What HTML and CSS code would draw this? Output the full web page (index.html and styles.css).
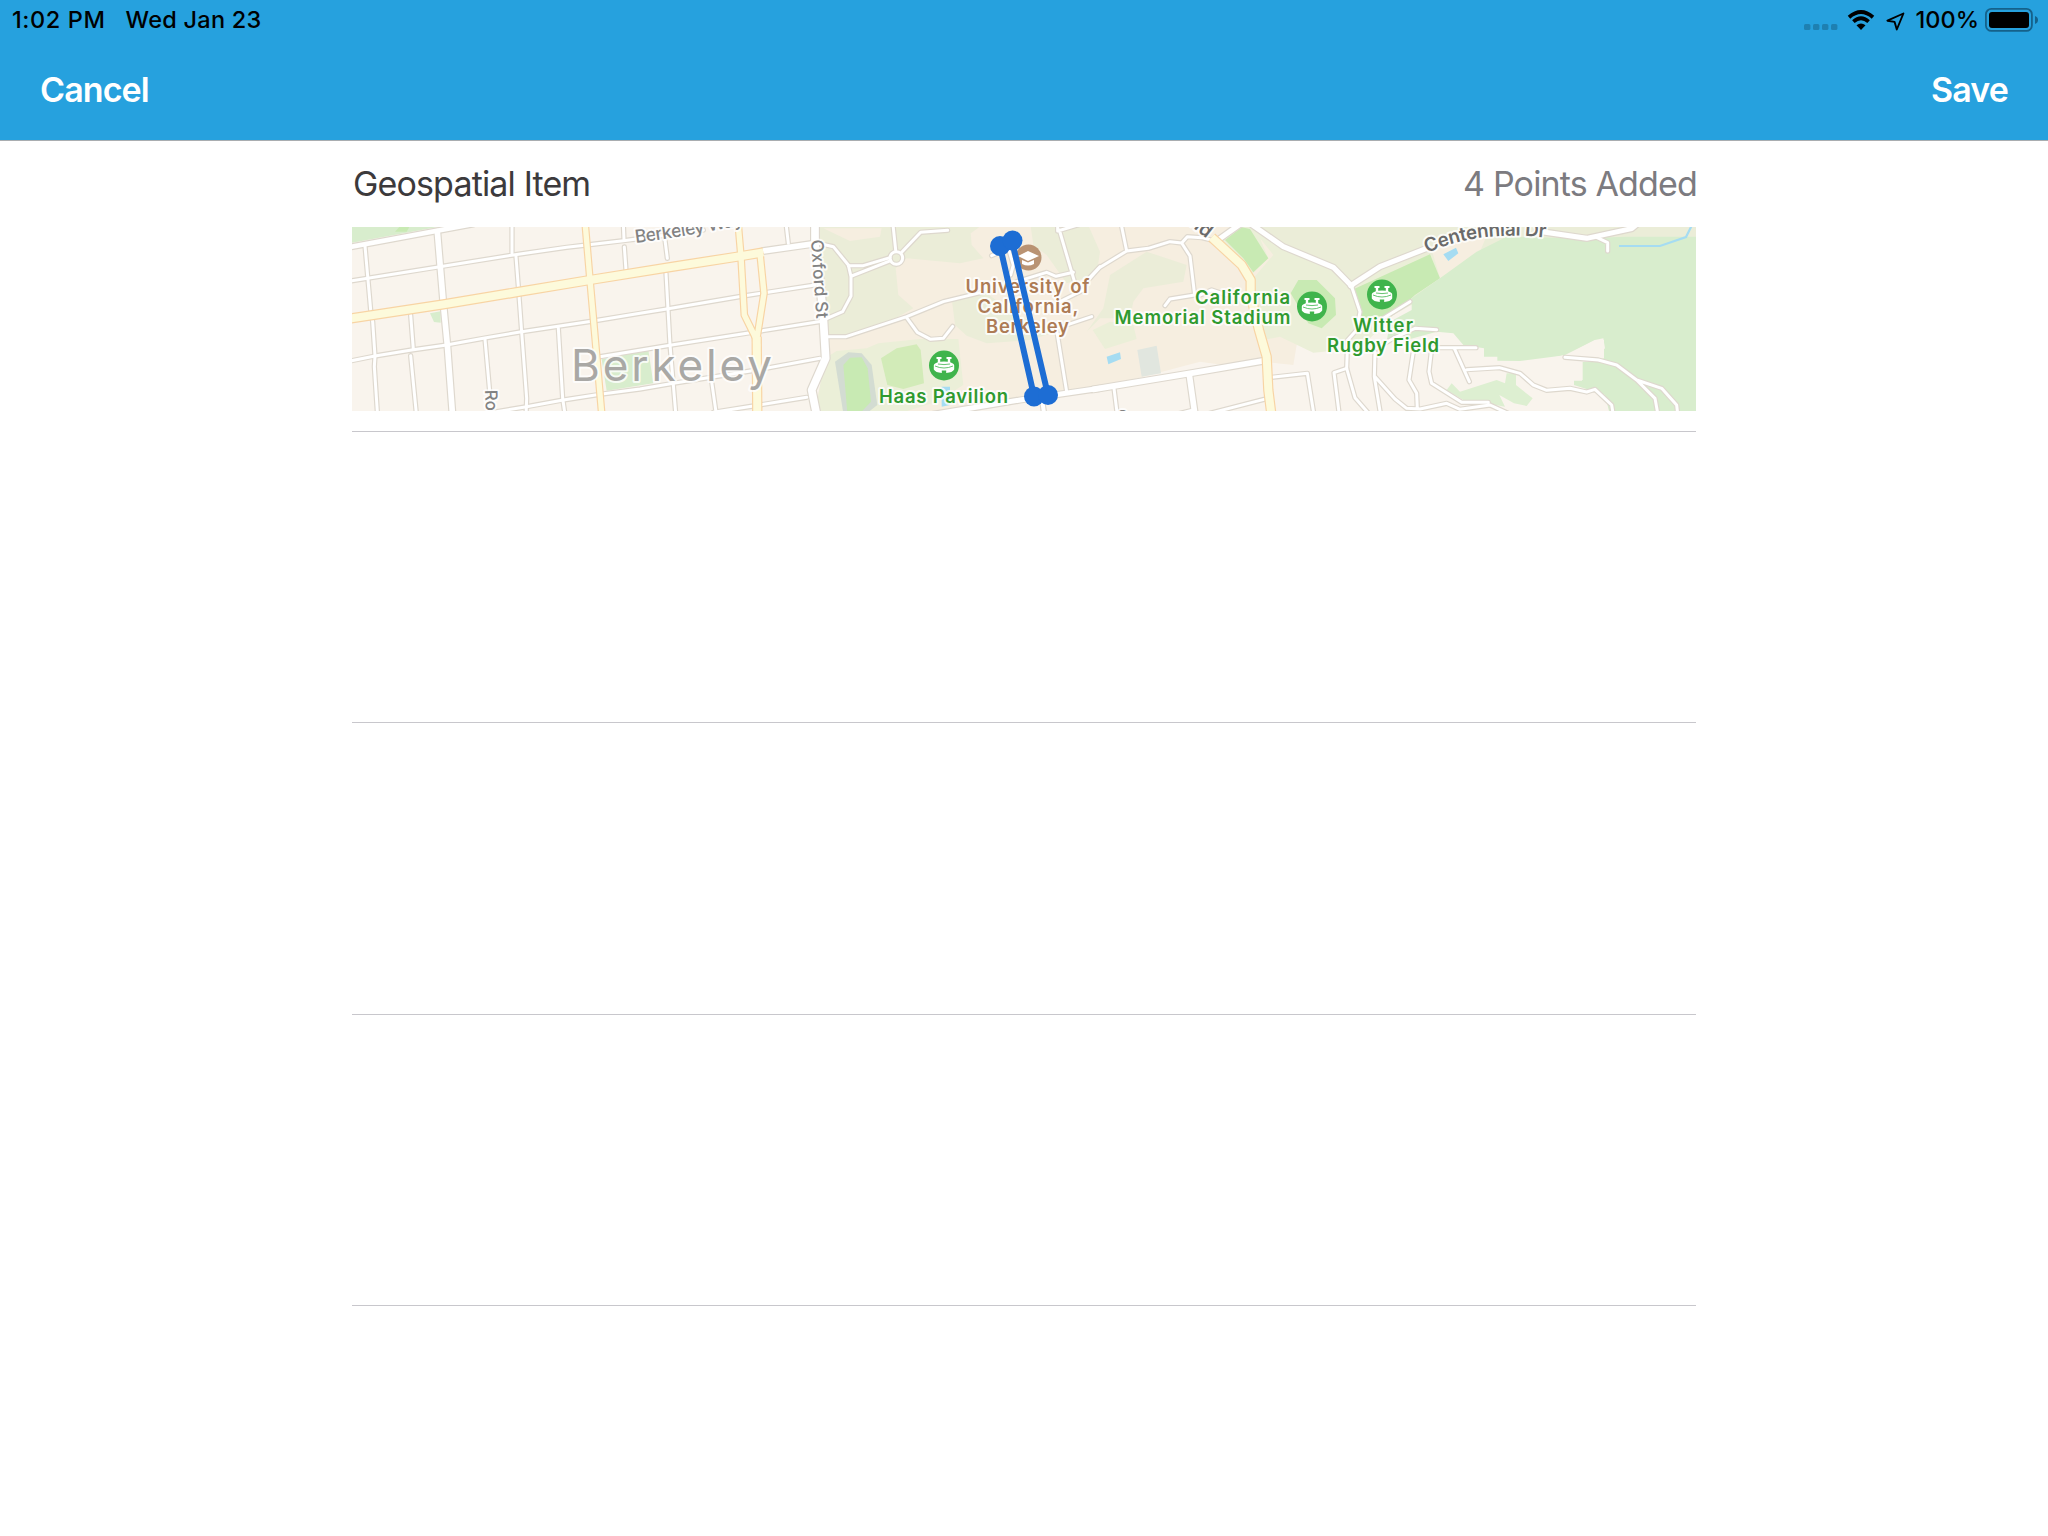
FILE: index.html
```html
<!DOCTYPE html>
<html lang="en">
<head>
<meta charset="utf-8">
<title>Geospatial Item</title>
<link rel="stylesheet" href="styles.css">
</head>
<body>
<header class="top">
  <div class="status">
    <div class="status-left"><span class="time">1:02 PM</span><span class="date">Wed Jan 23</span></div>
    <div class="status-right">
      <svg class="dots" viewBox="0 0 34 6"><rect width="6.4" height="6" rx="1.6"/><rect x="9" width="6.4" height="6" rx="1.6"/><rect x="18" width="6.4" height="6" rx="1.6"/><rect x="27" width="6.4" height="6" rx="1.6"/></svg>
      <svg class="wifi" viewBox="0 0 28 20"><path d="M2 7.2Q14-3.2 26 7.2M6.4 11.6Q14 5 21.6 11.6" fill="none" stroke="#000" stroke-width="3.8"/><path d="M9.5 15.3Q14 11.8 18.5 15.3L14 20Z"/></svg>
      <svg class="arrow" viewBox="0 0 19 19"><path d="M17.4 1.5 1.4 8.7 8.6 9.900 10.800 17.500Z" fill="none" stroke="#000" stroke-width="1.9" stroke-linejoin="round"/></svg>
      <span class="pct">100%</span>
      <svg class="battery" viewBox="0 0 54 24"><rect x=".9" y=".9" width="46" height="22" rx="5.5" fill="none" stroke="#15618a" stroke-width="1.8"/><rect x="4" y="4" width="40" height="16" rx="3"/><path d="M50 8q3 1.2 3 4t-3 4Z" fill="#15618a"/></svg>
    </div>
  </div>
  <nav class="bar"><span class="cancel">Cancel</span><span class="save">Save</span></nav>
</header>
<main class="form">
  <section class="item">
    <div class="heading"><h1 class="title">Geospatial Item</h1><span class="count">4 Points Added</span></div>
    <svg class="map" viewBox="352 227 1344 184">
      <defs>
        <g id="roads">
          <g transform="translate(340 150) scale(.33333)">
            <path class="r w14" d="M20 293 400 222"/>
            <path class="r w10" d="M20 395 300 350 520 315 680 292 740 285 850 272 890 267 1090 240"/>
            <path class="r w10" d="M20 635 105 618 215 600 320 585 430 565 540 546 760 513 900 490 980 477 1210 438 1425 405"/>
            <path class="r w10" d="M780 620 995 585 1250 545 1450 513"/>
            <path class="r w10" d="M440 790 560 770 670 750 780 733 900 717 1000 700 1250 660 1440 625"/>
            <path class="r w10" d="M1120 787 1240 768 1400 742"/>
            <path class="r w10" d="M75 288 92 480 98 515 105 618 103 650 113 800M212 495 220 598M212 617 230 800M516 220V310M528 320 535 410 545 546 560 745 558 800M435 568 450 735M655 535 668 745 676 800M850 220 852 268M853 291 858 360M975 270 982 325M978 370 990 585 1008 800M1115 695 1130 800M1338 220 1345 280"/>
            <path class="r w18" d="M292 245 310 460 322 585 338 800"/>
            <path class="r w18" d="M1270 303 1430 280"/>
          </g>
          <g transform="translate(800 215) scale(.33333)">
            <path class="r w24" d="M45 20V90L60 200 70 310 77 430 35 525 50 600"/>
            <path class="r w10" d="M55 85 100 95 145 150 153 185V243L128 290 70 315"/>
            <path class="r w10" d="M145 152H190L270 128M155 183 272 137M278 20 287 105M305 112 362 52 443 46"/>
            <circle class="r w10" cx="289" cy="129" r="19"/>
            <path class="r w10" d="M80 365H138L320 305 430 260 545 232M320 308 352 352 392 373 430 370 458 334"/>
            <path class="r w10" d="M575 122 625 100 640 150 632 180M650 200 740 172 768 184 820 172M773 30V48L840 28M778 45 825 205M780 260 850 225 862 195 900 155M770 340 875 305M770 345 800 530"/>
            <path class="r w16" d="M400 598 660 555 900 520"/>
            <path class="r w12" d="M727 560 733 600"/>
          </g>
          <g transform="translate(1060 215) scale(.33333)">
            <path class="r w18" d="M100 523 390 475 607 438"/>
            <path class="r w10" d="M90 190 118 158 200 108 265 100 330 80 365 84 382 65 425 68 465 78M182 20 200 108M365 84 390 123 404 240 330 252 315 272M420 240 455 225 500 240"/>
            <path class="r w10" d="M162 520 172 600M340 600 400 585M430 600 612 553M635 487 742 475 762 600M838 600 822 473 860 460"/>
            <path class="r w18" d="M388 480 405 600"/>
            <path class="r w16" d="M478 72 530 35 560 15"/>
            <path class="r w16" d="M570 25 670 95 820 157 875 213"/>
          </g>
          <g transform="translate(1260 215) scale(.33333)">
            <path class="r w16" d="M272 212 360 155 500 100"/>
            <path class="r w10" d="M275 215 300 290 290 345 263 375 260 460 285 548 330 600M370 310 450 260M350 400 400 370 465 340 530 344M345 410 343 485 362 600M345 485 405 552 440 580 480 582 560 565 600 583 690 570 755 600M460 410 447 495 470 535 472 582M515 400 507 470 515 505 605 562H685M520 398H648M583 400 628 500M620 464 718 458 780 475 820 510 860 526 930 520 980 531 1005 523 1055 570 1060 600"/>
          </g>
          <g transform="translate(1440 150) scale(.33333)">
            <path class="r w16" d="M290 243 440 265 575 236 600 215"/>
            <path class="r w10" d="M470 262 503 278V303M375 622 475 630 530 645 590 690 645 745 655 800M590 690 665 715 710 765 714 800"/>
          </g>
        </g>
        <g id="avenues" transform="translate(340 150) scale(.33333)">
          <path class="r w24" d="M20 507 310 463 540 425 750 390 1000 350 1205 318 1270 307"/>
          <path class="r w16" d="M735 215 750 390 765 560 786 800M1194 215 1203 320 1213 495 1250 570M1260 310 1272 430 1250 570"/>
          <path class="r w24" d="M1250 560 1252 800"/>
          <path class="r w24" d="M2615 262 2640 285 2705 345 2732 390V435L2757 540 2780 620 2785 720 2795 800"/>
        </g>
        <g id="stadium">
          <circle r="15" fill="#3fb44c"/>
          <path d="M-7.500-8.500h5v2h-1.300v2.800q3.800-.6 7.600 0V-6.500H2.500v-2h5v2H6.200v3.300Q10.200-2 10.200 0V4Q8.500 7 2.200 7.500V5H-2.200V7.500Q-8.500 7-10.200 4V0Q-10.200-2-6.200-3.200V-6.500h-1.300Z" fill="#fff"/>
          <path d="M-9 .5Q0 4.500 9 .5M-6-1.500Q0-.3 6-1.500" fill="none" stroke="#3fb44c" stroke-width=".8"/>
        </g>
        <path id="way" d="M636 243Q690 236 752 223"/>
        <path id="centennial" d="M1427 253Q1490 225 1572 242"/>
      </defs>

      <rect class="land" x="352" y="227" width="1344" height="184"/>
      <g transform="translate(340 150) scale(.33333)">
        <path class="park" d="M20 215H380L36 278H20Z"/><path class="field" d="M165 245 178 231H208L200 245Z"/>
        <path class="park" d="M270 490 302 484V518L282 516ZM785 628 925 600 940 700 800 722Z"/>
      </g>
      <g transform="translate(800 215) scale(.33333)">
        <path class="campus" d="M55 20H1700L1500 330 1480 450 1385 440 1270 450 1200 440 900 520 420 595H40L80 430Z"/>
        <path class="olive" d="M55 20H560L512 55 515 90 550 130 480 145 320 130 287 160 295 240 340 280 250 330 140 362 75 355Z"/>
        <path class="campus" d="M70 40H245L240 65 150 78Z"/>
        <path class="olive" d="M455 250 560 235 650 300 770 350 690 375 560 385 500 362 465 330ZM690 20H860L900 110 890 180 800 205 740 120 700 90ZM860 350 910 280 930 180 1040 110 1160 150 1150 200 1030 220 1000 260 990 310 900 310Z"/>
        <path class="lawn" d="M75 430 110 408 200 400 235 385 360 372 475 372 490 510 410 560 300 595H45Z"/>
        <path class="track" d="M105 440 145 412 185 415 215 450 232 570 200 595H130Z"/>
        <path class="field" d="M130 450 150 428 185 427 203 460 213 560 180 595H142Z"/>
        <path class="grass" d="M243 430 290 400 350 388 362 405 372 505 310 522 262 510Z"/>
        <path class="water" d="M425 515H450V570L425 575Z"/>
      </g>
      <g transform="translate(1060 215) scale(.33333)">
        <path class="lawn" d="M465 70 560 20H1500L1000 300 900 400 760 413 660 365 612 375 580 210Z"/>
        <path class="olive" d="M560 20H1920V130H1420L1100 120 940 170 870 200 820 150 660 95Z"/>
        <path class="campus" d="M580 190 640 120 600 70 625 130 578 175ZM1115 110 1200 60 1290 37 1260 110 1140 190 1120 120Z"/>
        <path class="field" d="M495 75 545 37 570 42 625 130 580 172 550 130ZM692 235 715 195H770L825 250 828 300 785 340 745 325Z"/>
        <path class="field" d="M882 222 1110 118 1140 190 1065 240 1000 300 905 310Z"/>
        <path class="pad" d="M232 405 290 392 303 475 245 485Z"/>
        <path class="lawn" d="M98 345 150 320 220 330 230 372 135 402Z"/>
        <path class="water" d="M140 425 180 412 183 432 145 448ZM1150 118 1188 98 1195 115 1165 138Z"/>
      </g>
      <g transform="translate(1260 215) scale(.33333)">
        <path class="park" d="M540 190 650 110 740 65 960 70 1100 65 1310 65V600H1050L1035 540 942 510V495H968V440L1000 430 1035 400 1030 370 1005 375 920 420 780 438 712 437V425H672V400L610 390 580 355 530 350 440 375 380 380 390 320 455 285 455 250Z"/>
        <path class="land" d="M915 420 1005 375H1032V430L1000 440H966V497H942V515L880 500 870 430Z"/>
        <path class="mint" d="M560 525 575 505 600 530 710 495 735 505 740 475H768V510L818 550 800 573 762 565 718 540 735 575 680 565 610 555Z"/>
      </g>
      <path d="M1619 246H1660L1686 237 1692 225" fill="none" stroke="#a5dcf2" stroke-width="2.200"/>

      <use href="#roads" class="casing"/>
      <use href="#roads" class="surface"/>
      <use href="#avenues" class="avenue-casing"/>
      <use href="#avenues" class="avenue-surface"/>

      <g class="street">
        <text font-size="18"><textPath href="#way" textLength="110">Berkeley Way</textPath></text>
        <text font-size="17" transform="translate(811 240) rotate(86)" textLength="79">Oxford St</text>
        <text font-size="17" transform="translate(485 390) rotate(88)">Rose St</text>
        <text class="dark" font-size="19"><textPath href="#centennial" textLength="121">Centennial Dr</textPath></text>
        <text class="dark" font-size="19" transform="translate(1188 224) rotate(38)">nd</text>
        <text font-size="17" x="1117" y="423">S</text>
      </g>
      <text class="city" x="571" y="381" textLength="201">Berkeley</text>

      <circle cx="1028.500" cy="257.500" r="13" fill="#b99373"/>
      <path d="M1018 256 1028 251 1039 256 1028 261ZM1022 260 1028 262.500 1034 260V264Q1028 267 1022 264Z" fill="#fff"/>
      <g class="label brown">
        <text x="965.500" y="293" textLength="124">University of</text>
        <text x="977.500" y="313" textLength="101">California,</text>
        <text x="986" y="333" textLength="83">Berkeley</text>
      </g>
      <g class="label green">
        <text x="879" y="403" textLength="129">Haas Pavilion</text>
        <text x="1195" y="303.500" textLength="95">California</text>
        <text x="1114.500" y="323.500" textLength="176">Memorial Stadium</text>
        <text x="1353" y="332" textLength="60">Witter</text>
        <text x="1327" y="352" textLength="112">Rugby Field</text>
      </g>
      <use href="#stadium" x="944" y="365.500"/>
      <use href="#stadium" x="1312" y="306.500"/>
      <use href="#stadium" x="1382" y="294.500"/>
      <g class="shape">
        <path d="M1000 246 1034 396M1012 241 1048 395"/>
        <circle cx="1000" cy="246" r="10"/><circle cx="1012.500" cy="240.500" r="10"/><circle cx="1034" cy="396.500" r="10"/><circle cx="1048" cy="395" r="10"/>
      </g>
    </svg>
  </section>
  <section class="item blank"></section>
  <section class="item blank tall"></section>
  <section class="item blank"></section>
</main>
</body>
</html>
```
FILE: styles.css
```css
body {
  margin: 0;
  background: #fff;
  font-family: Inter, "Liberation Sans", sans-serif;
}

.top {
  display: flex;
  flex-direction: column;
  height: 140px;
  background: #26a1de;
  border-bottom: 1px solid #a9adb0;
}

.status {
  display: flex;
  justify-content: space-between;
  height: 40px;
  padding: 0 9px 0 12px;
  font-size: 23.500px;
  font-weight: 500;
  line-height: 40px;
}

.status-left { display: flex; gap: 20px; }
.time { letter-spacing: .6px; }
.date { letter-spacing: .25px; }

.status-right { display: flex; align-items: center; }
.dots { width: 34px; height: 6px; margin: 14px 9px 0 0; fill: #1e80b1; }
.wifi { width: 28px; height: 20px; margin-right: 11px; }
.arrow { width: 19px; height: 19px; margin: 2px 11px 0 0; }
.pct { margin-right: 6px; }
.battery { width: 54px; height: 24px; }

.bar {
  display: flex;
  flex: 1;
  justify-content: space-between;
  padding: 0 40px;
  color: #fff;
  font-size: 34px;
  font-weight: 600;
  letter-spacing: -.9px;
  line-height: 100px;
}

.form { width: 1344px; margin: 0 auto; }

.item { border-bottom: 1px solid #c8c7cc; }

.heading {
  display: flex;
  justify-content: space-between;
  height: 86px;
  line-height: 85px;
  font-size: 34px;
  letter-spacing: -.85px;
}

.title { margin: 0 0 0 1px; font: inherit; color: #3c3a3c; }
.count { margin-right: -1px; color: #7c7b80; }
.map { display: block; width: 1344px; height: 184px; margin-bottom: 20px; }
.blank { height: 290px; }
.tall { height: 291px; }

.land { fill: #f9f4ed; }
.campus { fill: #f6eee0; }
.olive { fill: #ebedd8; }
.lawn { fill: #ebefd8; }
.park { fill: #d8edcd; }
.mint { fill: #ddefd1; }
.grass { fill: #d2ebb8; }
.field { fill: #c8eab3; }
.track { fill: #d3dcd2; }
.pad { fill: #e1e6df; }
.water { fill: #a5dcf2; }

.r { fill: none; stroke-width: calc(var(--w) + var(--edge)); stroke-linejoin: round; }
.w10 { --w: 9px; }
.w12 { --w: 12px; }
.w14 { --w: 14px; }
.w16 { --w: 15px; }
.w18 { --w: 17px; }
.w24 { --w: 23px; }

.casing { --edge: 7px; stroke: #ded8ce; stroke-linecap: round; }
.surface { --edge: 0px; stroke: #fff; stroke-linecap: round; }
.avenue-casing { --edge: 8px; stroke: #f8d4a4; }
.avenue-surface { --edge: 1px; stroke: #fdfadb; }

text {
  paint-order: stroke;
  stroke: #fffc;
  stroke-width: 4px;
  stroke-linejoin: round;
}

.street { fill: #828282; font-weight: 500; }
.dark { fill: #6a6a6a; font-weight: 600; }
.city { fill: #a9a8a5; font-size: 44px; font-weight: 400; }
.label { font-size: 18.500px; font-weight: 600; }
.brown { fill: #ad7b55; }
.green { fill: #2f9a2f; }

.shape { fill: #1d6dd4; }
.shape path { stroke: #1d6dd4; stroke-width: 6px; }
```
